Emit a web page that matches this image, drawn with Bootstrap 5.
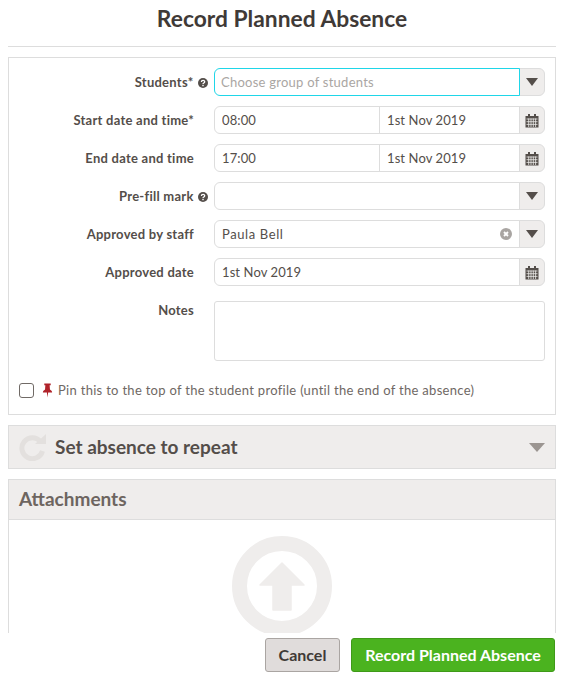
<!DOCTYPE html>
<html lang="en">
<head>
    <meta charset="UTF-8">
    <meta name="viewport" content="width=device-width, initial-scale=1.0">
    <title>Record Planned Absence</title>
    <link href="https://cdn.jsdelivr.net/npm/bootstrap@5.3.0/dist/css/bootstrap.min.css" rel="stylesheet">
    <style>
        html, body {
            height: 681px;
            overflow: hidden;
        }
        body {
            font-family: Lato, "Noto Sans", sans-serif;
            font-size: 13px;
            color: #544e4a;
            background-color: #fff;
        }
        .page-shell {
            height: 681px;
            padding: 0 12px 0 8px;
        }
        .scroll-area {
            flex: 1 1 auto;
            min-height: 0;
            overflow: hidden;
        }
        .page-title {
            height: 47px;
            margin: 0 0 10px;
            padding-top: 4px;
            border-bottom: 1px solid #ddd;
            text-align: center;
            font-size: 22.8px;
            line-height: 29px;
            font-weight: 700;
            color: #3f3a37;
        }
        .form-box {
            height: 358px;
            padding: 10px 10px 0 10px;
            border: 1px solid #ddd;
            margin-bottom: 10px;
        }
        .form-line {
            height: 28px;
            margin-bottom: 10px;
        }
        .line-label {
            flex: 0 0 175px;
            margin-right: 20px;
            font-size: 13px;
            font-weight: 700;
            letter-spacing: .25px;
            line-height: 28px;
            text-align: right;
            white-space: nowrap;
            color: #544e4a;
        }
        .help-icon {
            width: 10px;
            height: 10px;
            margin-left: 1px;
            margin-right: -14px;
            vertical-align: -1px;
        }
        .input-group .form-control {
            height: 28px;
            min-height: 28px;
            padding: 0 6px 1px 7px;
            font-size: 13px;
            letter-spacing: .1px;
            color: #544e4a;
            border-color: #ddd;
            border-width: 1px;
            box-shadow: none;
        }
        .input-group .form-control::placeholder {
            color: #aaa6a3;
            letter-spacing: .25px;
        }
        .input-group .focus-field {
            padding-left: 6px;
            border-color: #1fd6e8;
            z-index: 4;
        }
        .name-field {
            letter-spacing: .6px !important;
        }
        .time-field {
            flex: 0 0 166px !important;
        }
        .addon-box {
            width: 26px;
            height: 28px;
            padding: 0;
            justify-content: center;
            background-color: #efedec;
            border-color: #ddd;
        }
        .drop-caret {
            width: 0;
            height: 0;
            border-left: 6px solid transparent;
            border-right: 6px solid transparent;
            border-top: 8px solid #544e4a;
        }
        .clear-holder {
            position: absolute;
            right: 33px;
            top: 8px;
            z-index: 6;
            width: 12px;
            height: 12px;
        }
        .notes-line {
            height: 65px;
        }
        .notes-box {
            flex: 0 0 331px;
            height: 60px;
            margin-top: 5px;
            border-color: #ddd;
            border-radius: 3px;
            resize: none;
        }
        .pin-line {
            margin-top: 20px;
            font-size: 13px;
            letter-spacing: .3px;
            color: #6f6864;
        }
        .pin-line .form-check-input {
            flex: 0 0 15px;
            width: 15px;
            height: 15px;
            margin: 0 8px 0 0;
            border: 1px solid #706a66;
            border-radius: 3px;
        }
        .pin-icon {
            flex: 0 0 11px;
            margin-right: 5px;
        }
        .repeat-bar {
            height: 44px;
            padding: 0 10px;
            margin-bottom: 10px;
            background-color: #efedec;
            border: 1px solid #ddd;
            font-size: 19px;
            font-weight: 700;
            color: #544e4a;
        }
        .repeat-caret {
            width: 0;
            height: 0;
            border-left: 8px solid transparent;
            border-right: 8px solid transparent;
            border-top: 9px solid #9b9591;
        }
        .attach-box {
            border: 1px solid #ddd;
            border-bottom: 0;
            height: 300px;
        }
        .attach-head {
            height: 40px;
            padding: 0 10px;
            background-color: #efedec;
            border-bottom: 1px solid #ddd;
            font-size: 19px;
            line-height: 37px;
            font-weight: 700;
            color: #6d6560;
        }
        .page-foot {
            flex: 0 0 48px;
            padding: 5px 1px 0 0;
            gap: 11px;
        }
        .btn-cancel, .btn-record {
            height: 34px;
            padding: 0;
            font-size: 16px;
            font-weight: 700;
            border-radius: 3px;
        }
        .btn-cancel {
            width: 75px;
            color: #3f3a37;
            background-color: #e0dcdb;
            border: 1px solid #aaa5a2;
        }
        .btn-record {
            width: 204px;
            color: #fff;
            background-color: #4bb31f;
            border: 1px solid #3f9a18;
        }
    </style>
</head>
<body>
    <div class="page-shell d-flex flex-column">
        <div class="scroll-area">
            <h1 class="page-title">Record Planned Absence</h1>

            <div class="form-box">
                <div class="form-line d-flex">
                    <label class="line-label">Students*
                        <svg class="help-icon" viewBox="0 0 10 10"><circle cx="5" cy="5" r="5" fill="#544e4a"/><path d="M3.4 4 C3.4 2 6.7 2 6.7 3.8 C6.7 5 5 4.9 5 6" fill="none" stroke="#fff" stroke-width="1.3"/><rect x="4.3" y="6.8" width="1.4" height="1.4" fill="#fff"/></svg>
                    </label>
                    <div class="input-group flex-grow-1">
                        <input class="form-control focus-field" type="text" placeholder="Choose group of students">
                        <span class="input-group-text addon-box"><span class="drop-caret"></span></span>
                    </div>
                </div>

                <div class="form-line d-flex">
                    <label class="line-label">Start date and time*</label>
                    <div class="input-group flex-grow-1">
                        <input class="form-control time-field" type="text" value="08:00">
                        <input class="form-control" type="text" value="1st Nov 2019">
                        <span class="input-group-text addon-box">
                            <svg width="14" height="15" viewBox="0 0 14 15"><use href="#cal"/></svg>
                        </span>
                    </div>
                </div>

                <div class="form-line d-flex">
                    <label class="line-label">End date and time</label>
                    <div class="input-group flex-grow-1">
                        <input class="form-control time-field" type="text" value="17:00">
                        <input class="form-control" type="text" value="1st Nov 2019">
                        <span class="input-group-text addon-box">
                            <svg width="14" height="15" viewBox="0 0 14 15"><use href="#cal"/></svg>
                        </span>
                    </div>
                </div>

                <div class="form-line d-flex">
                    <label class="line-label">Pre-fill mark
                        <svg class="help-icon" viewBox="0 0 10 10"><circle cx="5" cy="5" r="5" fill="#544e4a"/><path d="M3.4 4 C3.4 2 6.7 2 6.7 3.8 C6.7 5 5 4.9 5 6" fill="none" stroke="#fff" stroke-width="1.3"/><rect x="4.3" y="6.8" width="1.4" height="1.4" fill="#fff"/></svg>
                    </label>
                    <div class="input-group flex-grow-1">
                        <input class="form-control" type="text">
                        <span class="input-group-text addon-box"><span class="drop-caret"></span></span>
                    </div>
                </div>

                <div class="form-line d-flex">
                    <label class="line-label">Approved by staff</label>
                    <div class="input-group flex-grow-1 position-relative">
                        <input class="form-control name-field" type="text" value="Paula Bell">
                        <span class="clear-holder">
                            <svg class="d-block" width="12" height="12" viewBox="0 0 12 12"><circle cx="6" cy="6" r="6" fill="#a9a5a2"/><path d="M4 4 L8 8 M8 4 L4 8" stroke="#fff" stroke-width="1.8"/></svg>
                        </span>
                        <span class="input-group-text addon-box"><span class="drop-caret"></span></span>
                    </div>
                </div>

                <div class="form-line d-flex">
                    <label class="line-label">Approved date</label>
                    <div class="input-group flex-grow-1">
                        <input class="form-control" type="text" value="1st Nov 2019">
                        <span class="input-group-text addon-box">
                            <svg width="14" height="15" viewBox="0 0 14 15"><use href="#cal"/></svg>
                        </span>
                    </div>
                </div>

                <div class="notes-line d-flex">
                    <label class="line-label">Notes</label>
                    <textarea class="form-control notes-box"></textarea>
                </div>

                <div class="pin-line d-flex align-items-center">
                    <input class="form-check-input" type="checkbox">
                    <svg class="pin-icon" width="11" height="15" viewBox="0 0 10 14"><path d="M2 0.5 H8 V2 H7 L7.3 6 C8.5 6.8 9.3 7.6 9.3 8.8 H5.6 L5 13.5 L4.4 8.8 H0.7 C0.7 7.6 1.5 6.8 2.7 6 L3 2 H2 Z" fill="#b0232a"/></svg>
                    <span class="text-nowrap">Pin this to the top of the student profile (until the end of the absence)</span>
                </div>
            </div>

            <div class="repeat-bar d-flex align-items-center">
                <svg class="me-2 flex-shrink-0" width="28" height="28" viewBox="0 0 28 28">
                    <path d="M21.5 8.5 A10.5 10.5 0 1 0 23.5 18" fill="none" stroke="#e3e0de" stroke-width="5"/>
                    <polygon points="16,11 27,11 27,1" fill="#e3e0de"/>
                </svg>
                <span class="flex-grow-1">Set absence to repeat</span>
                <span class="repeat-caret"></span>
            </div>

            <div class="attach-box">
                <div class="attach-head">Attachments</div>
                <div class="d-flex justify-content-center pt-3">
                    <svg width="100" height="100" viewBox="0 0 100 100">
                        <circle cx="50" cy="50" r="42.5" fill="none" stroke="#efedec" stroke-width="15"/>
                        <path d="M50 27 L72 49 H59 V74 H41 V49 H28 Z" fill="#efedec" stroke="#efedec" stroke-width="1.5" stroke-linejoin="round"/>
                    </svg>
                </div>
            </div>
        </div>

        <div class="page-foot d-flex justify-content-end">
            <button type="button" class="btn btn-cancel">Cancel</button>
            <button type="button" class="btn btn-record">Record Planned Absence</button>
        </div>
    </div>

    <svg class="d-none">
        <symbol id="cal" viewBox="0 0 14 15">
            <path d="M0.5 3 H3 V1 H5 V3 H9 V1 H11 V3 H13.5 V14.5 H0.5 Z" fill="#544e4a"/>
            <path d="M1.5 6 H12.5 M1.5 8.7 H12.5 M1.5 11.4 H12.5 M3.7 5.5 V14 M6 5.5 V14 M8.3 5.5 V14 M10.6 5.5 V14" stroke="#efedec" stroke-width="0.8"/>
        </symbol>
    </svg>

    <script src="https://cdn.jsdelivr.net/npm/bootstrap@5.3.0/dist/js/bootstrap.bundle.min.js"></script>
</body>
</html>
